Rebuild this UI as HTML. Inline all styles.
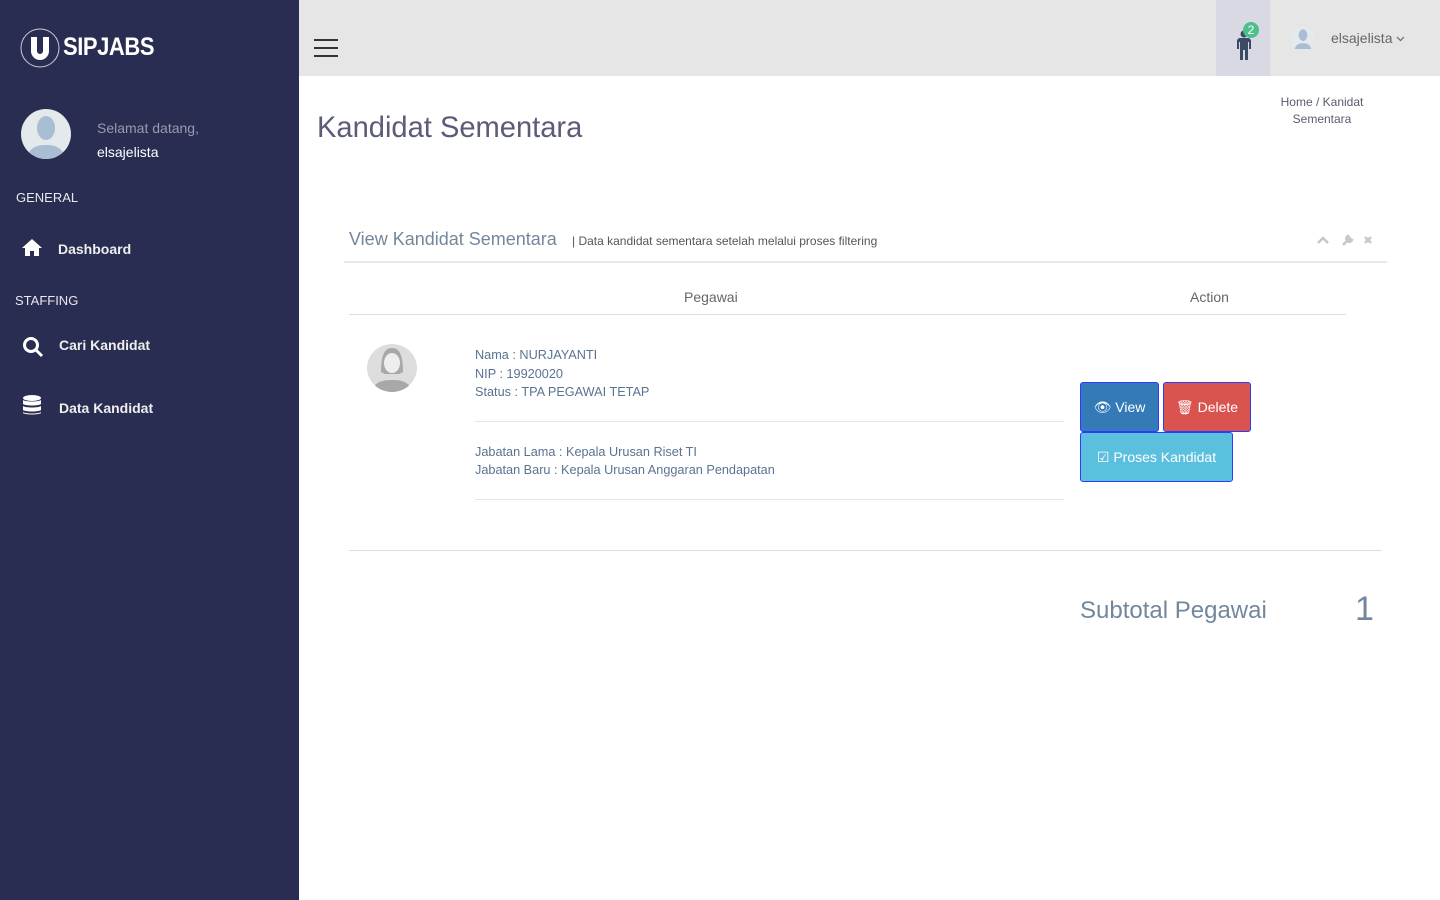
<!DOCTYPE html>
<html><head><meta charset="utf-8"><style>
*{margin:0;padding:0;box-sizing:border-box}
body{width:1440px;height:900px;overflow:hidden;font-family:"Liberation Sans",sans-serif;background:#fff;position:relative}
.abs{position:absolute}
.side{left:0;top:0;width:299px;height:900px;background:#2a2d52;color:#eee}
.top{left:299px;top:0;width:1141px;height:76px;background:#e6e6e6}
.t{position:absolute;white-space:nowrap}
.btn{position:absolute;border:1px solid #2a3cff;border-radius:3px;color:#fff;font-size:14px;display:flex;align-items:center;justify-content:center}
.line{position:absolute;height:1px;background:#e5e5e5}
</style></head><body>
<div class="abs side">
  <svg class="abs" style="left:20px;top:28px" width="40" height="40" viewBox="0 0 40 40"><circle cx="20" cy="20" r="19" fill="none" stroke="#ccd" stroke-width="1"/><path d="M11 9h6v14a3 3 0 0 0 6 0V9h6v14a9 9 0 0 1-18 0z" fill="#fff"/><rect x="17" y="5" width="6" height="3" fill="#2a2d52"/></svg>
  <div class="t" style="left:63px;top:33px;font-size:25px;font-weight:bold;color:#fff;letter-spacing:-0.5px;transform:scaleX(0.88);transform-origin:left">SIPJABS</div>
  <svg class="abs" style="left:21px;top:109px" width="50" height="50" viewBox="0 0 50 50"><circle cx="25" cy="25" r="25" fill="#e4e9ec"/><clipPath id="c"><circle cx="25" cy="25" r="25"/></clipPath><g clip-path="url(#c)" fill="#a9bdd3"><ellipse cx="25" cy="19" rx="9" ry="12"/><path d="M6 50c2-12 10-14 19-14s17 2 19 14z"/></g></svg>
  <div class="t" style="left:97px;top:120px;font-size:14px;color:#999ab0">Selamat datang,</div>
  <div class="t" style="left:97px;top:144px;font-size:14px;color:#fff">elsajelista</div>
  <div class="t" style="left:16px;top:190px;font-size:13px;color:#e8e8ee">GENERAL</div>
  <svg class="abs" style="left:22px;top:238px" width="20" height="18" viewBox="0 0 20 18"><path d="M10 1L0 10h3v8h5v-5h4v5h5v-8h3z" fill="#fff"/></svg>
  <div class="t" style="left:58px;top:241px;font-size:14px;font-weight:bold;color:#eee">Dashboard</div>
  <div class="t" style="left:15px;top:293px;font-size:13px;color:#e8e8ee">STAFFING</div>
  <svg class="abs" style="left:22px;top:336px" width="22" height="22" viewBox="0 0 22 22"><circle cx="9" cy="9" r="6.5" fill="none" stroke="#fff" stroke-width="3"/><path d="M14 14l6 6" stroke="#fff" stroke-width="3"/></svg>
  <div class="t" style="left:59px;top:337px;font-size:14px;font-weight:bold;color:#eee">Cari Kandidat</div>
  <svg class="abs" style="left:23px;top:395px" width="18" height="20" viewBox="0 0 18 20"><g fill="#fff"><ellipse cx="9" cy="3" rx="9" ry="3"/><path d="M0 5c2 2 16 2 18 0v4c-2 2-16 2-18 0z"/><path d="M0 11c2 2 16 2 18 0v4c-2 2-16 2-18 0z"/><path d="M0 17c2 2 16 2 18 0v1c-2 2-16 2-18 0z"/></g></svg>
  <div class="t" style="left:59px;top:400px;font-size:14px;font-weight:bold;color:#eee">Data Kandidat</div>
</div>
<div class="abs top">
  <div class="abs" style="left:15px;top:47px;width:24px;height:2px;background:#333;box-shadow:0 -8px 0 #333,0 8px 0 #333"></div>
  <div class="abs" style="left:917px;top:0;width:54px;height:76px;background:#d8d9e3"></div>
  <svg class="abs" style="left:937px;top:30px" width="16" height="30" viewBox="0 0 16 30"><g fill="#3d4a64"><circle cx="8" cy="4" r="3.5"/><path d="M3 8h10l2 2v9h-2v-7h-1v18h-3v-10h-2v10h-3v-18h-1v7h-2v-9z"/></g></svg>
  <div class="abs" style="left:944px;top:22px;width:16px;height:16px;border-radius:50%;background:#4cbf8a;color:#fff;font-size:12px;text-align:center;line-height:16px">2</div>
  <svg class="abs" style="left:992px;top:26px" width="24" height="24" viewBox="0 0 50 50"><circle cx="25" cy="25" r="25" fill="#e4e9ec"/><g fill="#a9bdd3"><ellipse cx="25" cy="19" rx="9" ry="12"/><path d="M8 48c2-10 9-12 17-12s15 2 17 12z"/></g></svg>
  <div class="t" style="left:1032px;top:30px;font-size:14px;color:#666">elsajelista <svg width="9" height="6" viewBox="0 0 9 6" style="vertical-align:middle"><path d="M1 1l3.5 3.5L8 1" stroke="#666" fill="none" stroke-width="1.2"/></svg></div>
</div>
<div class="t" style="left:1275px;top:94px;font-size:12px;color:#5a5c72;text-align:center;line-height:17px;width:94px;white-space:normal">Home / Kanidat Sementara</div>
<div class="t" style="left:317px;top:111px;font-size:30px;color:#5a5c78;transform:scaleX(0.97);transform-origin:left">Kandidat Sementara</div>
<div class="t" style="left:349px;top:229px;font-size:18px;color:#73879c">View Kandidat Sementara</div>
<div class="t" style="left:572px;top:234px;font-size:12px;color:#555">| Data kandidat sementara setelah melalui proses filtering</div>
<svg class="abs" style="left:1316px;top:233px" width="60" height="14" viewBox="0 0 60 14"><path d="M2 10l5-5 5 5" stroke="#c5c7cb" stroke-width="2.5" fill="none"/><path d="M27 12l6-6M32 3a3 3 0 1 0 4 4l-2-1-1-2z" stroke="#c5c7cb" stroke-width="2.5" fill="none"/><path d="M49 4l6 6M55 4l-6 6" stroke="#c5c7cb" stroke-width="2.5"/></svg>
<div class="line" style="left:344px;top:261px;width:1043px;height:2px;background:#e6e9ed"></div>
<div class="t" style="left:684px;top:289px;font-size:14px;color:#666">Pegawai</div>
<div class="t" style="left:1190px;top:289px;font-size:14px;color:#666">Action</div>
<div class="line" style="left:349px;top:314px;width:997px;background:#ddd"></div>
<svg class="abs" style="left:367px;top:344px" width="50" height="48" viewBox="0 0 50 48"><ellipse cx="25" cy="24" rx="25" ry="24" fill="#ddd"/><clipPath id="d"><ellipse cx="25" cy="24" rx="25" ry="24"/></clipPath><g clip-path="url(#d)" fill="#a8a8a8"><path d="M14 28c0-18 4-24 11-24s11 6 11 24l-4 2h-14z"/><path d="M5 48c2-10 10-12 20-12s18 2 20 12z"/></g><ellipse cx="25" cy="19" rx="8" ry="10" fill="#eee"/></svg>
<div class="t" style="left:475px;top:346px;font-size:12.7px;color:#5a7391;line-height:18.5px">Nama : NURJAYANTI<br>NIP : 19920020<br>Status : TPA PEGAWAI TETAP</div>
<div class="line" style="left:475px;top:421px;width:589px"></div>
<div class="t" style="left:475px;top:443px;font-size:12.7px;color:#5a7391;line-height:18px">Jabatan Lama : Kepala Urusan Riset TI<br>Jabatan Baru : Kepala Urusan Anggaran Pendapatan</div>
<div class="line" style="left:475px;top:499px;width:589px"></div>
<div class="btn" style="left:1080px;top:382px;width:79px;height:50px;background:#337ab7">&#128065;&#xFE0E; View</div>
<div class="btn" style="left:1163px;top:382px;width:88px;height:50px;background:#d9534f">&#128465;&#xFE0E; Delete</div>
<div class="btn" style="left:1080px;top:432px;width:153px;height:50px;background:#5bc0de">&#9745; Proses Kandidat</div>
<div class="line" style="left:349px;top:550px;width:1033px;background:#ddd"></div>
<div class="t" style="left:1080px;top:597px;font-size:24px;color:#73879c">Subtotal Pegawai</div>
<div class="t" style="left:1355px;top:590px;font-size:34px;color:#73879c">1</div>
</body></html>
